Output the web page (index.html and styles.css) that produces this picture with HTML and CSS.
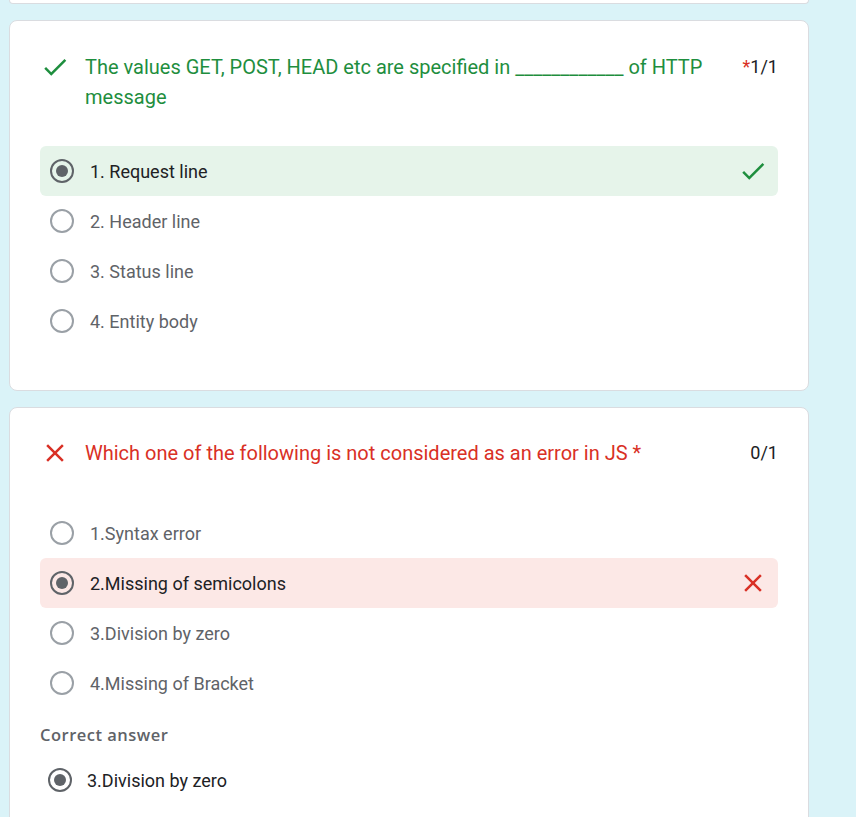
FILE: index.html
```html
<!DOCTYPE html>
<html>
<head>
<meta charset="utf-8">
<link rel="stylesheet" href="styles.css">
</head>
<body>
<div class="page">
  <div class="card-stub"></div>

  <section class="card card-first">
    <div class="q-head">
      <svg class="q-icon" viewBox="0 0 24 24"><path fill="#1e8e3e" d="M9 16.17L4.83 12l-1.42 1.41L9 19 21 7l-1.41-1.41z"/></svg>
      <div class="q-title correct">The values GET, POST, HEAD etc are specified in ____________ of HTTP message</div>
      <div class="q-score"><span class="req">*</span>1/1</div>
    </div>
    <div class="options">
      <div class="opt sel ok">
        <span class="radio on"></span>
        <span class="opt-text">1. Request line</span>
        <svg class="opt-mark" viewBox="0 0 24 24"><path fill="#1e8e3e" d="M9 16.17L4.83 12l-1.42 1.41L9 19 21 7l-1.41-1.41z"/></svg>
      </div>
      <div class="opt"><span class="radio"></span><span class="opt-text">2. Header line</span></div>
      <div class="opt"><span class="radio"></span><span class="opt-text">3. Status line</span></div>
      <div class="opt"><span class="radio"></span><span class="opt-text">4. Entity body</span></div>
    </div>
  </section>

  <section class="card card-second">
    <div class="q-head">
      <svg class="q-icon" viewBox="0 0 24 24"><path fill="#d93025" d="M19 6.41L17.59 5 12 10.59 6.41 5 5 6.41 10.59 12 5 17.59 6.41 19 12 13.41 17.59 19 19 17.59 13.41 12z"/></svg>
      <div class="q-title wrong">Which one of the following is not considered as an error in JS *</div>
      <div class="q-score">0/1</div>
    </div>
    <div class="options">
      <div class="opt"><span class="radio"></span><span class="opt-text">1.Syntax error</span></div>
      <div class="opt sel bad">
        <span class="radio on"></span>
        <span class="opt-text">2.Missing of semicolons</span>
        <svg class="opt-mark" viewBox="0 0 24 24"><path fill="#d93025" d="M19 6.41L17.59 5 12 10.59 6.41 5 5 6.41 10.59 12 5 17.59 6.41 19 12 13.41 17.59 19 19 17.59 13.41 12z"/></svg>
      </div>
      <div class="opt"><span class="radio"></span><span class="opt-text">3.Division by zero</span></div>
      <div class="opt"><span class="radio"></span><span class="opt-text">4.Missing of Bracket</span></div>
    </div>
    <div class="answer-label">Correct answer</div>
    <div class="opt answer"><span class="radio on"></span><span class="opt-text">3.Division by zero</span></div>
  </section>
</div>
</body>
</html>
```
FILE: styles.css
```css
* { box-sizing: border-box; }
html, body { margin: 0; padding: 0; }
body {
  background: #daf3f8;
  font-family: Roboto, "Liberation Sans", sans-serif;
  color: #202124;
  height: 817px;
  overflow: hidden;
}
.page {
  width: 800px;
  margin-left: 9px;
  display: flex;
  flex-direction: column;
  gap: 16px;
}
.card-stub {
  height: 4px;
  background: #fff;
  border: 1px solid #dadce0;
  border-top: none;
  border-radius: 0 0 8px 8px;
}
.card {
  background: #fff;
  border: 1px solid #dadce0;
  border-radius: 8px;
  padding: 0 30px;
}
.card-first { padding-top: 31px; padding-bottom: 44px; }
.card-second { padding-top: 30px; padding-bottom: 40px; }

.q-head {
  display: flex;
  align-items: flex-start;
}
.q-icon {
  width: 30px;
  height: 30px;
  flex: none;
}
.q-title {
  flex: 1;
  margin-left: 15px;
  font-size: 20px;
  line-height: 30px;
}
.q-title.correct { color: #1e8e3e; }
.q-title.wrong { color: #d93025; }
.q-score {
  width: 60px;
  flex: none;
  text-align: right;
  font-size: 18px;
  line-height: 30px;
  color: #202124;
}
.req { color: #d93025; }

.card-first .options { margin-top: 34px; }
.card-second .options { margin-top: 40px; }

.opt {
  height: 50px;
  display: flex;
  align-items: center;
  padding: 0 10px;
  border-radius: 6px;
}
.opt.ok { background: #e6f4ea; }
.opt.bad { background: #fce8e6; }
.radio {
  width: 24px;
  height: 24px;
  flex: none;
  border: 2px solid #9aa0a6;
  border-radius: 50%;
  display: flex;
  align-items: center;
  justify-content: center;
}
.radio.on { border-color: #5f6368; }
.radio.on::after {
  content: "";
  width: 12px;
  height: 12px;
  border-radius: 50%;
  background: #5f6368;
}
.opt-text {
  margin-left: 16px;
  font-size: 18px;
  color: #5f6368;
  flex: 1;
}
.opt.sel .opt-text, .opt.answer .opt-text { color: #202124; }
.opt-mark {
  width: 30px;
  height: 30px;
  flex: none;
}
.answer-label {
  margin-top: 14px;
  font-family: "Open Sans", Roboto, sans-serif;
  font-size: 16.5px;
  font-weight: 600;
  letter-spacing: 0.5px;
  color: #5f6368;
  line-height: 26px;
}
.opt.answer {
  margin-top: 7px;
  padding-left: 8px;
}
.opt.answer .opt-text { margin-left: 15px; }
```
